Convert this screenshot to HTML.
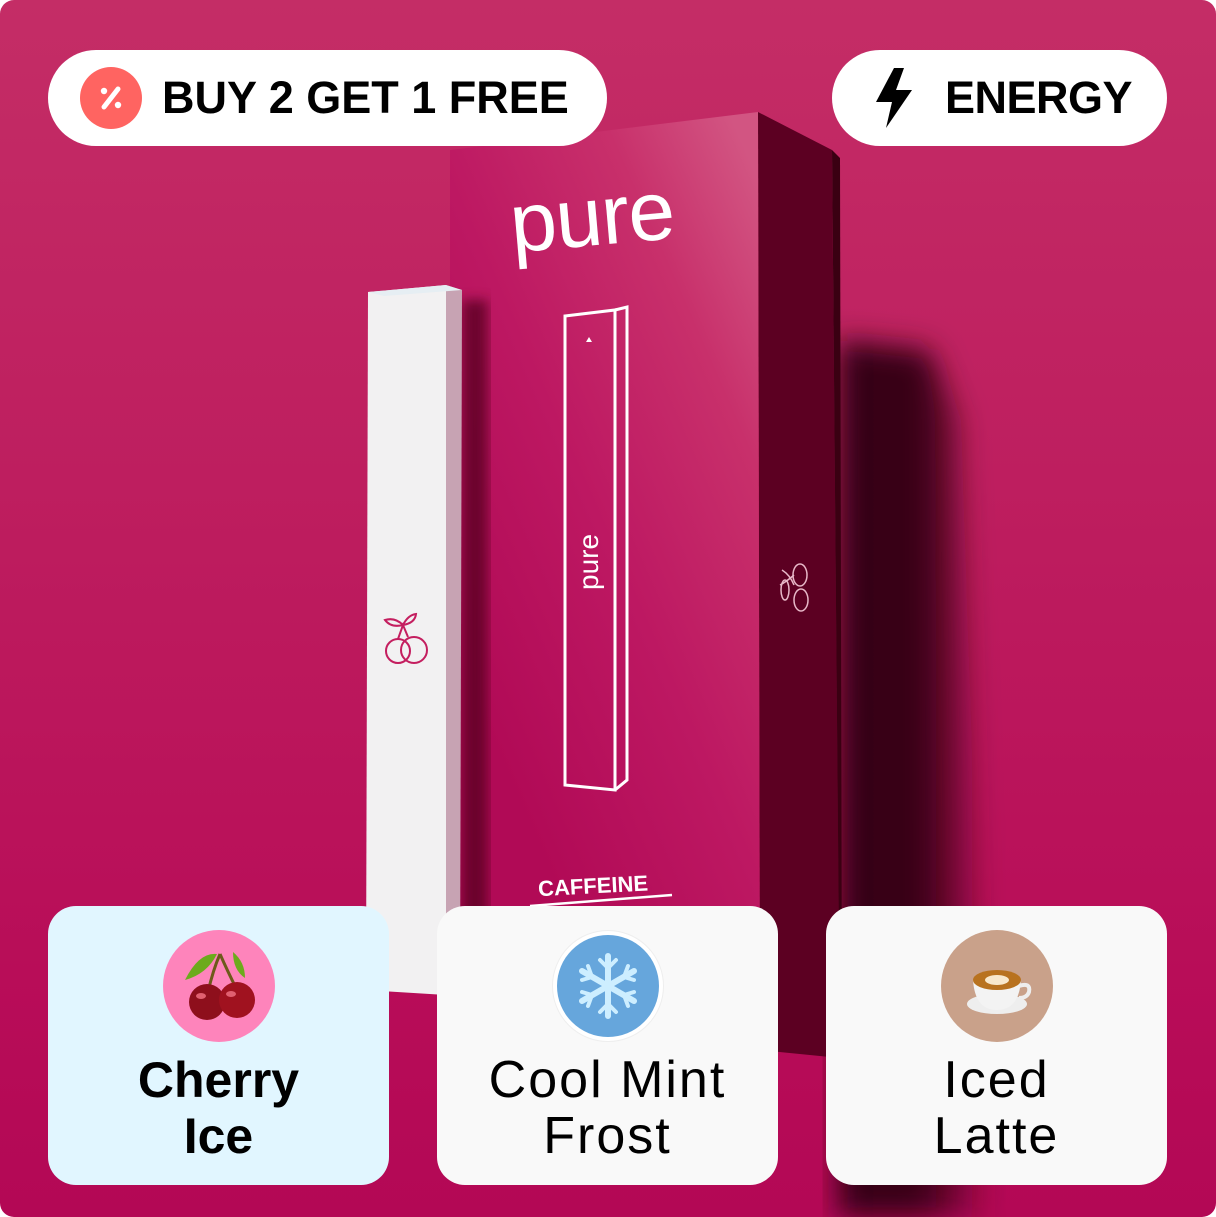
<!DOCTYPE html>
<html><head><meta charset="utf-8"><style>
*{margin:0;padding:0;box-sizing:border-box}
body{width:1216px;height:1217px;overflow:hidden;background:#fff;font-family:"Liberation Sans",Arial,sans-serif}
#wrap{position:absolute;left:0;top:0;width:1216px;height:1217px;border-radius:14px;overflow:hidden;
background:linear-gradient(180deg,#c42d66 0%,#bd1c5e 45%,#b80d58 80%,#b30855 100%)}
svg.scene{position:absolute;left:0;top:0}
.pill{position:absolute;background:#fff;border-radius:48px;height:96px;top:50px;display:flex;align-items:center;font-weight:700;font-size:45px;color:#000}
.card{position:absolute;top:906px;width:341px;height:279px;border-radius:28px;background:#f9f9f9;text-align:center}
.circ{position:absolute;left:115px;top:24px;width:112px;height:112px;border-radius:50%}
.lbl{position:absolute;left:0;right:0;top:146px;font-size:52px;line-height:56px;color:#000;letter-spacing:2px}
</style></head><body>
<div id="wrap">
<svg class="scene" width="1216" height="1217" viewBox="0 0 1216 1217">
<defs>
<linearGradient id="front" x1="0.9" y1="0" x2="0.3" y2="0.8">
<stop offset="0" stop-color="#d25582"/><stop offset="0.25" stop-color="#c8306b"/><stop offset="0.6" stop-color="#bd1862"/><stop offset="1" stop-color="#b10a56"/>
</linearGradient>
<linearGradient id="shad" x1="0" y1="0" x2="1" y2="0">
<stop offset="0" stop-color="#340013"/><stop offset="0.55" stop-color="#3a0015"/><stop offset="1" stop-color="#3a0015" stop-opacity="0"/>
</linearGradient>
<filter id="bl"><feGaussianBlur stdDeviation="14"/></filter>
<filter id="bl2"><feGaussianBlur stdDeviation="6"/></filter>
</defs>
<path d="M838 340 L930 350 L960 420 L990 1217 L838 1217 Z" fill="url(#shad)" filter="url(#bl)"/>
<path d="M758 112 L832 150 L840 1058 L760 1050 Z" fill="#5c0022"/>
<path d="M832 150 L840 158 L842 1058 L840 1058 Z" fill="#3a0012"/>
<path d="M450 150 L758 112 L760 1050 L450 1010 Z" fill="url(#front)"/>
<rect x="462" y="300" width="26" height="700" fill="#5a0020" filter="url(#bl2)" opacity="0.8"/>
<text x="510" y="245" font-family="Liberation Sans,sans-serif" font-size="84" fill="#fff" transform="rotate(-5 595 220)" letter-spacing="-1">pure</text>
<path d="M565 316 L615 310 L615 790 L565 785 Z" fill="none" stroke="#fff" stroke-width="3"/>
<path d="M615 310 L627 307 L627 780 L615 790" fill="none" stroke="#fff" stroke-width="3"/>
<path d="M586 342 l3 -5 l3 5 z" fill="#fff"/>
<text x="0" y="0" font-family="Liberation Sans,sans-serif" font-size="28" fill="#fff" transform="translate(598 590) rotate(-90)">pure</text>
<text x="538" y="893" font-family="Liberation Sans,sans-serif" font-weight="700" font-size="22" fill="#fff" transform="rotate(-3 600 885)">CAFFEINE</text>
<path d="M530 906 L672 895" stroke="#fff" stroke-width="2.5"/>
<g fill="none" stroke="#e8b8c8" stroke-width="1.5"><ellipse cx="800" cy="575" rx="7" ry="11"/><ellipse cx="801" cy="600" rx="7" ry="11"/><path d="M782 570 q8 5 12 15 M780 585 q6 -3 14 -10"/><ellipse cx="785" cy="590" rx="4" ry="10"/></g>
<path d="M368 292 L446 285 L446 995 L366 990 Z" fill="#f2f1f2"/>
<path d="M446 285 L462 290 L460 992 L446 995 Z" fill="#c7a3b3"/>
<path d="M368 292 L446 285 L462 290 L384 296 Z" fill="#e6eef3"/>
<g fill="none" stroke="#c41e5f" stroke-width="2">
<circle cx="398" cy="651" r="12"/><circle cx="414" cy="650" r="13"/>
<path d="M398 639 L403 625 L408 637 M403 625 q-8 -8 -18 -5 q6 8 18 5 M403 625 q5 -10 13 -11 q-1 9 -13 11"/>
</g>
</svg>

<div class="pill" style="left:48px;width:559px">
<div style="position:absolute;left:32px;top:17px;width:62px;height:62px;border-radius:50%;background:#ff6461"></div>
<svg style="position:absolute;left:32px;top:17px" width="62" height="62" viewBox="0 0 62 62"><path d="M24 40 L38 22" stroke="#fff" stroke-width="5" stroke-linecap="round"/><circle cx="24" cy="24" r="3.2" fill="#fff"/><circle cx="38" cy="38" r="3.2" fill="#fff"/></svg>
<span style="position:absolute;left:114px;top:23px;line-height:50px">BUY 2 GET 1 FREE</span>
</div>
<div class="pill" style="left:832px;width:335px">
<svg style="position:absolute;left:40px;top:16px" width="46" height="64" viewBox="0 0 46 64"><path d="M22 2 L4 36 L20 36 L14 62 L40 24 L24 24 L32 2 Z" fill="#000"/></svg>
<span style="position:absolute;left:113px;top:23px;line-height:50px;letter-spacing:-0.5px">ENERGY</span>
</div>

<div class="card" style="left:48px;background:#e1f6ff">
<div class="circ" style="background:#fe84bb"></div>
<svg style="position:absolute;left:115px;top:24px" width="112" height="112" viewBox="0 0 112 112">
<path d="M57 24 Q50 40 45 62 M57 24 Q64 40 74 60" stroke="#6d5a1a" stroke-width="3" fill="none"/>
<path d="M54 24 Q36 22 22 50 Q44 44 54 24Z" fill="#6cab1c"/>
<path d="M70 22 Q82 32 82 48 Q70 40 70 22Z" fill="#6cab1c"/>
<circle cx="44" cy="72" r="18" fill="#8e0f1c"/><circle cx="74" cy="70" r="18" fill="#a0121f"/>
<ellipse cx="38" cy="66" rx="5" ry="3" fill="#e06070"/><ellipse cx="68" cy="64" rx="5" ry="3" fill="#e06070"/>
</svg>
<div class="lbl" style="font-weight:700;font-size:50px;letter-spacing:0">Cherry<br>Ice</div>
</div>
<div class="card" style="left:437px">
<div class="circ" style="background:#fff;border:1px solid #eee"></div>
<div class="circ" style="left:120px;top:29px;width:102px;height:102px;background:#66a6dc"></div>
<svg style="position:absolute;left:115px;top:24px" width="112" height="112" viewBox="0 0 112 112"><g stroke="#cdeeff" stroke-width="6" stroke-linecap="round" fill="none">
<path d="M56 26 V86 M30 41 L82 71 M30 71 L82 41"/>
<path d="M48 30 L56 38 L64 30 M48 82 L56 74 L64 82 M30 50 L40 47 L36 36 M82 50 L72 47 L76 36 M30 62 L40 65 L36 76 M82 62 L72 65 L76 76" stroke-width="4"/></g></svg>
<div class="lbl">Cool Mint<br>Frost</div>
</div>
<div class="card" style="left:826px">
<div class="circ" style="background:#c9a18a"></div>
<svg style="position:absolute;left:115px;top:24px" width="112" height="112" viewBox="0 0 112 112">
<ellipse cx="56" cy="74" rx="30" ry="10" fill="#eeeeee"/>
<path d="M32 50 Q34 80 56 80 Q78 80 80 50 Z" fill="#f3f3f3"/>
<path d="M78 56 q12 -4 10 6 q-2 6 -10 6" fill="none" stroke="#eee" stroke-width="4"/>
<ellipse cx="56" cy="50" rx="24" ry="10" fill="#b8721f"/>
<ellipse cx="56" cy="50" rx="12" ry="5" fill="#f8e8cc"/>
</svg>
<div class="lbl">Iced<br>Latte</div>
</div>
</div>
</body></html>
